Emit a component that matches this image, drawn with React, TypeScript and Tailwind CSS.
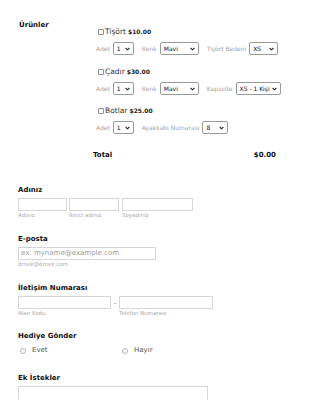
import React from "react";

function Chevron() {
  return (
    <svg width="5" height="4" viewBox="0 0 6 4" className="shrink-0">
      <path d="M0.8 0.8 L3 3 L5.2 0.8" fill="none" stroke="#222" strokeWidth="1.3" />
    </svg>
  );
}

function Sel({ w, value }: { w: string; value: string }) {
  return (
    <div
      className={`flex items-center justify-between h-[13px] ${w} border border-[#9a9a9a] rounded-[2px] bg-white pl-[3px] pr-[3px] text-[6px] leading-[10px] text-[#111]`}
    >
      <span className="whitespace-nowrap">{value}</span>
      <Chevron />
    </div>
  );
}

function Lbl({ children }: { children: React.ReactNode }) {
  return <span className="text-[6px] text-[#a3a3a3] whitespace-nowrap mr-[3px]">{children}</span>;
}

function ItemHead({ name, price }: { name: string; price: string }) {
  return (
    <div className="flex items-center h-[10px] pl-[2px]">
      <span className="w-[6px] h-[6px] border border-[#8f8f8f] rounded-[1px] bg-white" />
      <span className="text-[7.5px] leading-[10px] text-[#333] ml-[1px]">{name}</span>
      <span className="text-[6px] leading-[10px] font-bold text-[#222] ml-[2px]">{price}</span>
    </div>
  );
}

function FieldLabel({ children }: { children: React.ReactNode }) {
  return <div className="h-[10px] leading-[10px] text-[7px] font-bold text-[#111] whitespace-nowrap">{children}</div>;
}

function Sub({ children, w }: { children: React.ReactNode; w?: string }) {
  return <div className={`h-[7px] leading-[8px] text-[5.5px] text-[#aaa] whitespace-nowrap ${w ?? ""}`}>{children}</div>;
}

function Box({ w }: { w: string }) {
  return <div className={`h-[13px] ${w} border border-[#d6d6d6] bg-white`} />;
}

function Radio({ label }: { label: string }) {
  return (
    <div className="flex items-center">
      <span className="w-[6px] h-[6px] rounded-full border border-[#b5b5b5] bg-white" />
      <span className="ml-[6px] text-[7px] text-[#555]">{label}</span>
    </div>
  );
}

export default function App() {
  return (
    <div className="w-[325px] h-[400px] overflow-hidden bg-white font-['DejaVu_Sans',Verdana,sans-serif] pt-[20px]">
      {/* Products */}
      <div className="flex pl-[19px]">
        <div className="w-[77px] h-[10px] leading-[10px] text-[7px] font-bold text-[#111]">Ürünler</div>
        <div className="flex flex-col pt-[7px]">
          <ItemHead name="Tişört" price="$10.00" />
          <div className="flex items-center mt-[5px]">
            <Lbl>Adet</Lbl>
            <Sel w="w-[21px]" value="1" />
            <span className="w-[8px]" />
            <Lbl>Renk</Lbl>
            <Sel w="w-[39px]" value="Mavi" />
            <span className="w-[8px]" />
            <Lbl>Tişört Bedeni</Lbl>
            <Sel w="w-[29px]" value="XS" />
          </div>

          <div className="mt-[12px]">
            <ItemHead name="Çadır" price="$30.00" />
          </div>
          <div className="flex items-center mt-[5px]">
            <Lbl>Adet</Lbl>
            <Sel w="w-[21px]" value="1" />
            <span className="w-[8px]" />
            <Lbl>Renk</Lbl>
            <Sel w="w-[39px]" value="Mavi" />
            <span className="w-[8px]" />
            <Lbl>Kapasite</Lbl>
            <Sel w="w-[45px]" value="XS - 1 Kişi" />
          </div>

          <div className="mt-[11px]">
            <ItemHead name="Botlar" price="$25.00" />
          </div>
          <div className="flex items-center mt-[5px]">
            <Lbl>Adet</Lbl>
            <Sel w="w-[21px]" value="1" />
            <span className="w-[8px]" />
            <Lbl>Ayakkabı Numarası</Lbl>
            <Sel w="w-[26px]" value="8" />
          </div>
        </div>
      </div>

      {/* Total */}
      <div className="flex justify-between items-center h-[10px] mt-[16px] pl-[93px] pr-[49px] text-[7px] font-bold text-[#111]">
        <span>Total</span>
        <span>$0.00</span>
      </div>

      <div className="pl-[18px]">
        {/* Name */}
        <div className="mt-[25px]">
          <FieldLabel>Adınız</FieldLabel>
          <div className="flex mt-[3px] gap-[2px]">
            <div>
              <Box w="w-[49px]" />
              <Sub>Adınız</Sub>
            </div>
            <div>
              <Box w="w-[50px]" />
              <Sub>İkinci adınız</Sub>
            </div>
            <div className="ml-[1px]">
              <Box w="w-[71px]" />
              <Sub>Soyadınız</Sub>
            </div>
          </div>
        </div>

        {/* Email */}
        <div className="mt-[16px]">
          <FieldLabel>E-posta</FieldLabel>
          <div className="mt-[3px] h-[13px] w-[138px] border border-[#d6d6d6] flex items-center pl-[2px] text-[7px] text-[#9a9a9a] whitespace-nowrap">
            ex: myname@example.com
          </div>
          <Sub>örnek@örnek.com</Sub>
        </div>

        {/* Phone */}
        <div className="mt-[16px]">
          <FieldLabel>İletişim Numarası</FieldLabel>
          <div className="flex mt-[3px]">
            <div>
              <Box w="w-[93px]" />
              <Sub>Alan Kodu</Sub>
            </div>
            <div className="w-[8px] h-[13px] flex items-center justify-center text-[6px] text-[#444]">-</div>
            <div>
              <Box w="w-[94px]" />
              <Sub>Telefon Numarası</Sub>
            </div>
          </div>
        </div>

        {/* Gift */}
        <div className="mt-[15px]">
          <FieldLabel>Hediye Gönder</FieldLabel>
          <div className="flex items-center h-[11px] mt-[4px] pl-[2px]">
            <div className="w-[102px]">
              <Radio label="Evet" />
            </div>
            <Radio label="Hayır" />
          </div>
        </div>

        {/* Extra */}
        <div className="mt-[17px]">
          <FieldLabel>Ek İstekler</FieldLabel>
          <div className="mt-[3px] h-[60px] w-[190px] border border-[#d6d6d6] bg-white" />
        </div>
      </div>
    </div>
  );
}
